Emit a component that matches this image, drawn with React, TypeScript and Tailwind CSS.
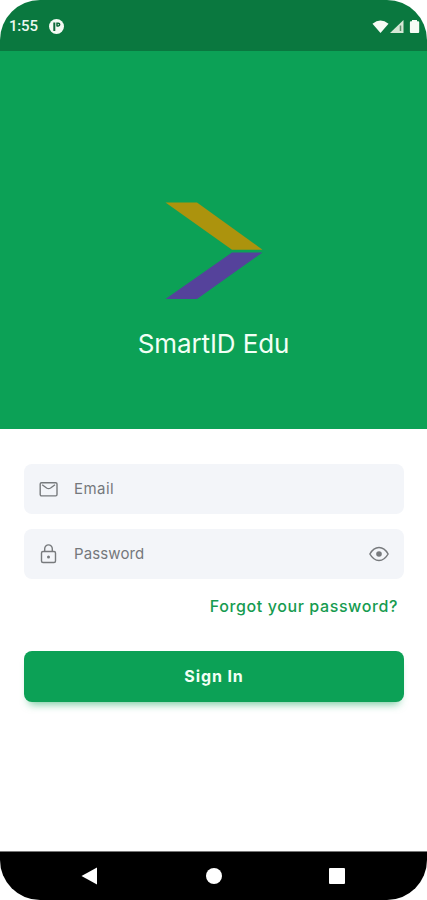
import React from "react";

function StatusBar() {
  return (
    <header className="flex h-[51px] shrink-0 items-center bg-[#0a783f] pl-[9px] pr-[7px] pt-[2px] text-white">
      <span className="text-[15px] font-medium leading-none tracking-[-0.2px] text-[#edf8ef]">1:55</span>
      <svg className="ml-[11px]" width="15" height="15" viewBox="0 0 15 15">
        <circle cx="7.5" cy="7.5" r="7.5" fill="#f3faf3" />
        <path d="M5.300 3.500v8.500" fill="none" stroke="#0a6838" strokeWidth="2" />
        <path d="M8 7.500V4.200h1.300a1.400 1.400 0 0 1 0 2.800H8" fill="none" stroke="#0a6838" strokeWidth="1.500" />
      </svg>
      <svg className="ml-auto" width="48" height="16" viewBox="0 0 48 16">
        <path d="M0.500 4.700Q8.500-1.700 16.500 4.700L8.500 14Z" fill="#f7fcf5" />
        <path d="M18 14 31.500 1V14Z" fill="#d5e7d5" />
        <path d="M28.500 6.500V12" stroke="#5b8d69" strokeWidth="1.500" />
        <path d="M40 1h5v1.300h1.200q1 0 1 1V13q0 1-1 1h-7.300q-1 0-1-1V3.300q0-1 1-1H40Z" fill="#f7fcf5" />
      </svg>
    </header>
  );
}

function Brand() {
  return (
    <section className="flex h-[378px] shrink-0 flex-col items-center bg-[#0ca156] pt-[151px]">
      <svg width="98" height="98" viewBox="0 0 98 98">
        <path d="M0.500 0.500H32L97.500 47.700H67Z" fill="#ac930d" />
        <path d="M67 50.500H97.500L32 97H0.500Z" fill="#55429b" />
      </svg>
      <h1 className="mt-[26px] whitespace-nowrap font-[Inter,sans-serif] text-[26px] font-normal leading-[36px] tracking-[-0.100px] text-[#f2fff5]">SmartID Edu</h1>
    </section>
  );
}

function MailIcon() {
  return (
    <svg className="shrink-0" width="20" height="22" viewBox="0 0 20 22" fill="none" stroke="#777a7d" strokeWidth="1.400">
      <rect x="1.200" y="4.700" width="16.800" height="13.200" rx="1.300" />
      <path d="m3.200 6.700 4.400 3.300q2 1.300 4 0L16 6.700" />
    </svg>
  );
}

function LockIcon() {
  return (
    <svg className="shrink-0" width="20" height="22" viewBox="0 0 20 22" fill="none" stroke="#777a7d" strokeWidth="1.400">
      <rect x="2.500" y="8.500" width="14" height="11" rx="1.500" />
      <path d="M5.700 8.500V5.700a3.800 3.800 0 0 1 7.600 0v2.800" />
      <circle cx="9.500" cy="14" r="1.500" fill="#777a7d" stroke="none" />
    </svg>
  );
}

function EyeIcon() {
  return (
    <svg className="ml-auto shrink-0" width="20" height="16" viewBox="0 0 20 16" fill="none" stroke="#777a7d" strokeWidth="1.500">
      <path d="M0.900 8Q4.500 1.500 10 1.500T19.100 8Q15.500 14.500 10 14.500T0.900 8Z" />
      <circle cx="10" cy="8" r="2.800" fill="#777a7d" stroke="none" />
    </svg>
  );
}

function SignInForm() {
  return (
    <main className="flex flex-1 flex-col bg-white pl-6 pr-[23px] pt-[35px] font-[Inter,sans-serif]">
      <div className="flex h-[50px] shrink-0 items-center rounded-lg bg-[#f3f5f9] px-[15px] text-[#75787c]">
        <MailIcon />
        <span className="ml-[15px] text-[15px] tracking-[0.450px]">Email</span>
      </div>
      <div className="mt-[15px] flex h-[50px] shrink-0 items-center rounded-lg bg-[#f3f5f9] px-[15px] text-[#75787c]">
        <LockIcon />
        <span className="ml-[15px] text-[15px] tracking-[0.120px]">Password</span>
        <EyeIcon />
      </div>
      <a className="mr-[6px] mt-[15px] self-end whitespace-nowrap text-[16px] font-medium leading-6 tracking-[0.600px] text-[#169b50]">Forgot your password?</a>
      <button className="mt-[33px] flex h-[51px] shrink-0 items-center justify-center rounded-lg bg-[#0ca156] pb-[2px] text-[16px] font-bold tracking-[0.900px] text-[#f2fff5] shadow-[0_7px_8px_-5px_#0ea15799]">Sign In</button>
    </main>
  );
}

function NavigationBar() {
  return (
    <nav className="flex h-[49px] shrink-0 items-center justify-between border-t border-[#777777] bg-black pl-[81px] pr-[82px]">
      <svg width="17" height="18" viewBox="0 0 17 18"><path d="M0.500 9 16 0.500V17.500Z" fill="white" /></svg>
      <div className="h-4 w-4 rounded-full bg-white" />
      <div className="h-4 w-4 rounded-[1px] bg-white" />
    </nav>
  );
}

export default function App() {
  return (
    <div className="h-[900px] w-[427px] bg-white">
      <div className="flex h-full flex-col overflow-hidden rounded-[40px] font-[Roboto,sans-serif]">
        <StatusBar />
        <Brand />
        <SignInForm />
        <NavigationBar />
      </div>
    </div>
  );
}
